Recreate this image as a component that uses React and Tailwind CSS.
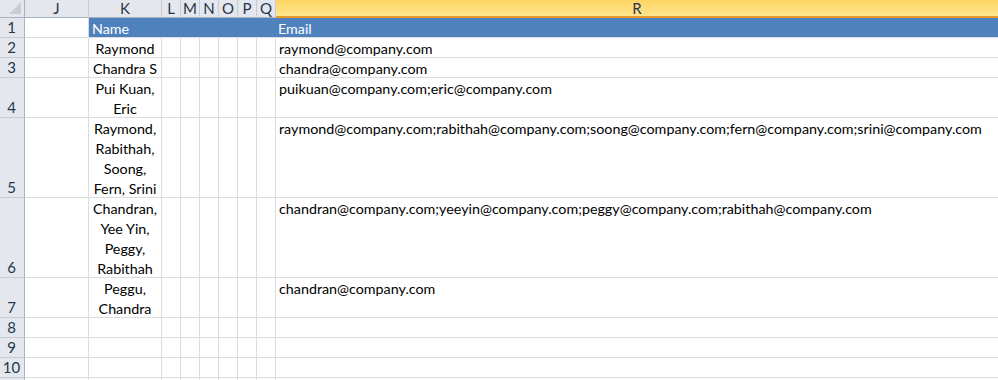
import React from 'react';

const font = { fontFamily: 'Lato, "Open Sans", sans-serif' };

const rows = [
  { n: 2, h: 'h-[20px]', name: ['Raymond'], email: 'raymond@company.com' },
  { n: 3, h: 'h-[20px]', name: ['Chandra S'], email: 'chandra@company.com' },
  { n: 4, h: 'h-[40px]', name: ['Pui Kuan,', 'Eric'], email: 'puikuan@company.com;eric@company.com' },
  {
    n: 5,
    h: 'h-[80px]',
    name: ['Raymond,', 'Rabithah,', 'Soong,', 'Fern, Srini'],
    email: 'raymond@company.com;rabithah@company.com;soong@company.com;fern@company.com;srini@company.com',
  },
  {
    n: 6,
    h: 'h-[80px]',
    name: ['Chandran,', 'Yee Yin,', 'Peggy,', 'Rabithah'],
    email: 'chandran@company.com;yeeyin@company.com;peggy@company.com;rabithah@company.com',
  },
  { n: 7, h: 'h-[40px]', name: ['Peggu,', 'Chandra'], email: 'chandran@company.com' },
  { n: 8, h: 'h-[20px]', name: [], email: '' },
  { n: 9, h: 'h-[20px]', name: [], email: '' },
  { n: 10, h: 'h-[20px]', name: [], email: '' },
  { n: '', h: 'h-[20px]', name: [], email: '' },
];

const narrow = ['L', 'M', 'N', 'O', 'P', 'Q'];

function RowHead({ children, h }) {
  return (
    <div className={`w-[25px] shrink-0 ${h} flex items-end justify-center bg-[#e4e8ee] border-r border-r-[#a9b3bf] border-b border-b-[#c6ccd4] text-[#27364a] text-[15px] leading-[19px] pr-[1px]`}>
      {children}
    </div>
  );
}

function Cell({ w, h, children, className = '' }) {
  return (
    <div className={`${w} ${h} shrink-0 border-r border-b border-[#dadcdd] overflow-visible ${className}`}>
      {children}
    </div>
  );
}

export default function App() {
  return (
    <div className="w-[998px] h-[380px] overflow-hidden bg-white text-[14.3px] text-black" style={font}>
      {/* column headers */}
      <div className="flex h-[18px] text-[15px]">
        <div className="w-[25px] shrink-0 relative bg-[#e4e8ee] border-r border-b border-[#a9b3bf]">
          <div className="absolute right-[3px] bottom-[3px] w-0 h-0 border-l-[12px] border-l-transparent border-b-[12px] border-b-[#c9ced5]" />
        </div>
        {[['J', 'w-[64px]'], ['K', 'w-[73px]']].concat(narrow.map(l => [l, 'w-[19px]'])).map(([l, w]) => (
          <div key={l} className={`${w} shrink-0 flex items-center justify-center bg-[#e4e8ee] border-r border-r-[#c6ccd4] border-b border-b-[#a9b3bf] text-[#27364a] leading-[17px]`}>
            {l}
          </div>
        ))}
        <div className="flex-1 flex items-center justify-center bg-gradient-to-b from-[#fdd464] to-[#fde68c] border-b-2 border-b-[#e69a2e] text-[#27364a] leading-[16px]">
          R
        </div>
      </div>

      {/* row 1 */}
      <div className="flex">
        <RowHead h="h-[20px]">1</RowHead>
        <Cell w="w-[64px]" h="h-[20px]" />
        <div className="w-[186px] shrink-0 h-[20px] bg-[#4f81bd] border-b border-[#dadcdd] text-white leading-[20px] pl-[3px] pt-[1px]">Name</div>
        <div className="flex-1 h-[20px] bg-[#4f81bd] border-b border-[#dadcdd] text-white leading-[20px] pl-[3px] pt-[1px]">Email</div>
      </div>

      {rows.map((r, i) => (
        <div key={i} className="flex">
          <RowHead h={r.h}>{r.n}</RowHead>
          <Cell w="w-[64px]" h={r.h} />
          <Cell w="w-[73px]" h={r.h} className="flex flex-col items-center leading-[20px] pt-[1px]">
            {r.name.map(t => (
              <span key={t} className="whitespace-nowrap">{t}</span>
            ))}
          </Cell>
          {narrow.map(l => (
            <Cell key={l} w="w-[19px]" h={r.h} />
          ))}
          <div className={`flex-1 ${r.h} border-b border-[#dadcdd] leading-[20px] pl-[3px] pt-[1px] whitespace-nowrap`}>{r.email}</div>
        </div>
      ))}
    </div>
  );
}
